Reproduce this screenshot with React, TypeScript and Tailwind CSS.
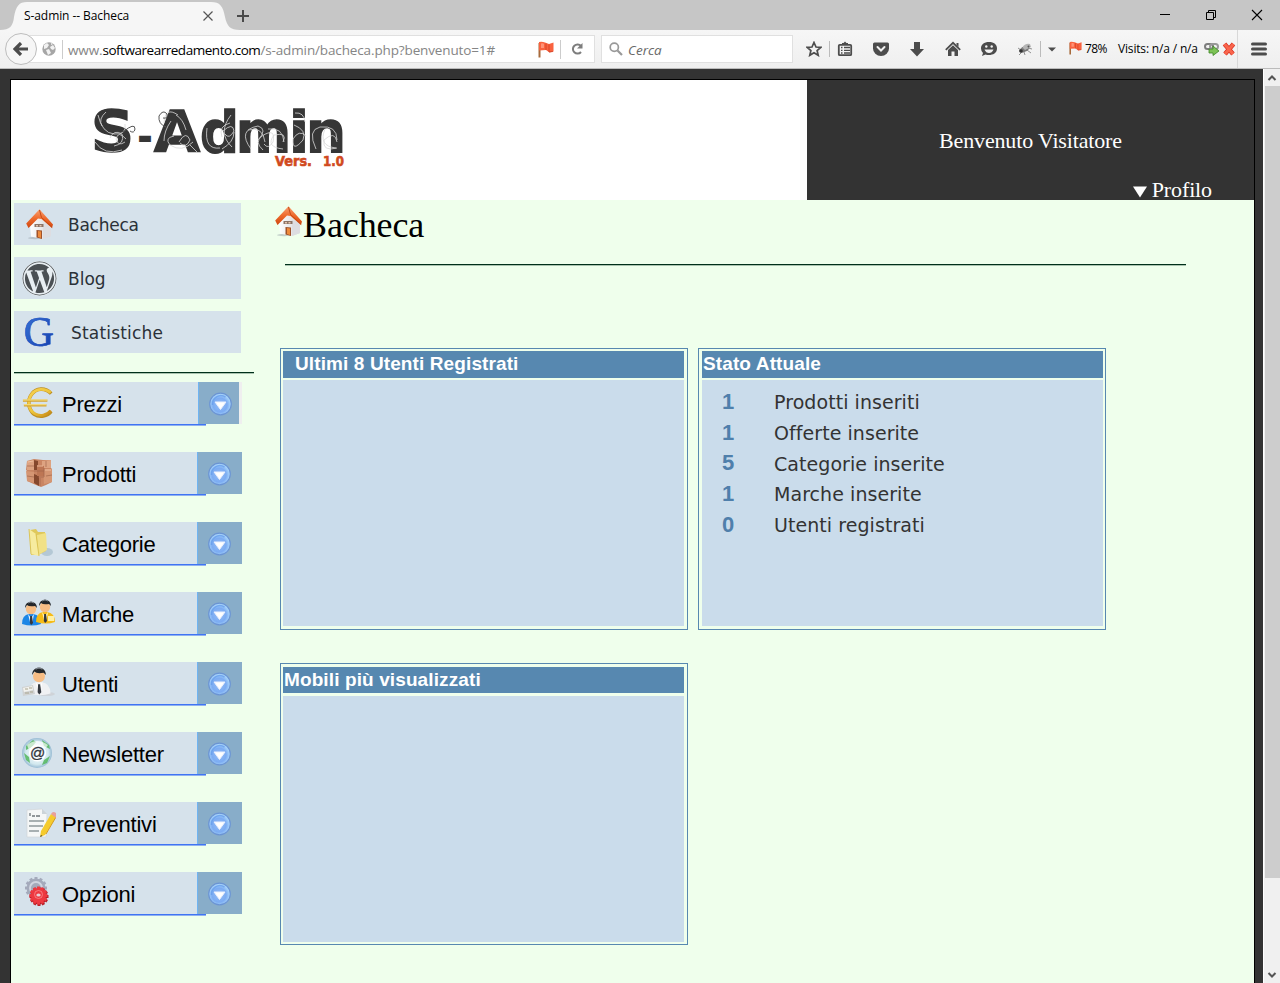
import type { ReactNode } from 'react';
import { FaWordpress } from 'react-icons/fa';

function HouseIcon({ className }: { className: string }) {
  return (
    <svg viewBox="0 0 27 31" className={className}>
      <defs>
        <linearGradient id="roof" x1="0" y1="0" x2="0" y2="1">
          <stop offset="0" stopColor="#f9a173" />
          <stop offset="0.5" stopColor="#ee6a2c" />
          <stop offset="1" stopColor="#cf4710" />
        </linearGradient>
        <linearGradient id="wall" x1="0" y1="0" x2="1" y2="0">
          <stop offset="0" stopColor="#ffffff" />
          <stop offset="1" stopColor="#d5d5d8" />
        </linearGradient>
      </defs>
      <ellipse cx="9" cy="29" rx="7" ry="1.200" fill="#9aa3ab" opacity="0.5" />
      <path d="M4 16 L13 8 L25 18 V27 L17 30 L5 27.500Z" fill="url(#wall)" />
      <path d="M17 14 L25 18 V27 L17 30Z" fill="#dddde1" />
      <path d="M10.500 21 L16 21.500 V30 L10.500 28.500Z" fill="#a0522a" />
      <path d="M12 22 L15 22.500 V29 L12 28Z" fill="#ef8a3c" />
      <path d="M8.500 15 L17.500 15 V18 L8.500 18Z" fill="#8c7467" />
      <path d="M10 16h2v1.500h-2z M13.500 16h2v1.500h-2z" fill="#e3c3ae" />
      <path d="M13.500 0.300 L27 15.500 L26 19 L15.500 10 L12 9.500 L2.500 19 L0.200 14.500Z" fill="url(#roof)" />
      <path d="M13.500 1 L15.500 8.500 L26.200 18.500" stroke="#c2440f" strokeWidth="0.9" fill="none" />
    </svg>
  );
}

function EuroIcon() {
  return (
    <svg viewBox="0 0 34 34" className="mr-[2px] size-8">
      <defs>
        <linearGradient id="gold" x1="0" y1="0" x2="1" y2="1">
          <stop offset="0" stopColor="#f5d050" />
          <stop offset="0.5" stopColor="#eec63b" />
          <stop offset="1" stopColor="#c88a16" />
        </linearGradient>
      </defs>
      <path d="M31 7 C25 .5 15 .5 10 8 C5 15 7 24 13 29 C19 33 27 31 31 26" fill="none" stroke="#bc8d20" strokeWidth="3.800" />
      <path d="M30.500 6 C24 .8 15 1.500 10 8 C5 15 7 24 13 28 C19 32 27 30 30.500 25" fill="none" stroke="url(#gold)" strokeWidth="3" />
      <path d="M1 14.500 H27 M2 19.500 H26" stroke="#d3a332" strokeWidth="2.400" />
      <path d="M1 13.800 H27 M2 18.800 H26" stroke="#fae88a" strokeWidth="1.100" />
    </svg>
  );
}

function BoxesIcon() {
  return (
    <svg viewBox="0 0 34 34" className="size-[34px]">
      <path d="M5 5 L12 3 L21 4 L29 4 L29 12 L30 13 V26 L24 29 L19 31 L14 29 L5 25 V15 L4 14Z" fill="#c98563" />
      <path d="M5 5 L13 4 V14 L5 14Z M20 5 L29 4 V12 L20 12Z" fill="#dda381" />
      <path d="M4 15 L12 16 V27 L5 25Z M21 13 L30 13 V26 L22 28Z" fill="#d59673" />
      <path d="M12 4 L16 5 V14 L12 14Z M12 18 L17 20 V30 L12 27Z" fill="#85482d" />
      <path d="M15 9 L22 10 V20 L15 20Z" fill="#bd7654" />
      <path d="M12 15 H22 M22 12 V21 H16 M5 10 H12 M24 5 V11 M5 20 L12 21 M24 20 L30 19 M18 22V30" stroke="#a0654a" strokeWidth="0.700" fill="none" />
      <path d="M15 10h6M23 14h6M6 6l5-1" stroke="#efc1a2" strokeWidth="0.900" />
    </svg>
  );
}

function FolderIcon() {
  return (
    <svg viewBox="0 0 34 34" className="size-[34px]">
      <ellipse cx="25" cy="26" rx="6" ry="4" fill="#9cb8c6" opacity="0.6" />
      <path d="M8 4 L14 3 L16 6 L23 6 L24 25 L16 29 L9 29Z" fill="#dfc85b" />
      <path d="M15 9 L24 7 L25 24 L16 29Z" fill="#f1e186" />
      <path d="M7 3 L14 8 L17 30 L9 28Z" fill="#f6eb9f" />
      <path d="M14 8 L17 30 M7 3 L9 28" stroke="#d9bf4d" strokeWidth="0.900" />
    </svg>
  );
}

function Person({ x, y, body, collar }: { x: number; y: number; body: string; collar: string }) {
  return (
    <g transform={`translate(${x} ${y})`}>
      <path d="M-9 23 Q-9 14 -2 13 L2 13 Q10 14 10 23 Q1 26 -9 23Z" fill={body} />
      <path d="M-3 13 L0 17 L3 13 L1.500 21 H-1Z" fill={collar} />
      <path d="M-.8 15 H1 L2 22 L.2 24 L-1.200 22Z" fill="#34383f" />
      <circle cx="0" cy="8" r="5.200" fill="#f7bd84" />
      <path d="M-6 7 C-6 -1.500 6 -1.500 6 7 L4 5 Q-2 6 -4 4Z" fill="#24272a" />
      <path d="M-3 2 Q0 0 3 2" stroke="#7b8288" strokeWidth="1" fill="none" />
    </g>
  );
}

function PeopleIcon() {
  return (
    <svg viewBox="0 0 34 34" className="size-[34px] overflow-visible">
      <Person x={9} y={5} body="#1b86e6" collar="#e9f2ff" />
      <Person x={23} y={3} body="#f6bb17" collar="#fff3c0" />
      <path d="M26 20h6v5h-6z" fill="#fff0a5" />
    </svg>
  );
}

function UserIcon() {
  return (
    <svg viewBox="0 0 34 34" className="size-[34px]">
      <ellipse cx="24" cy="28" rx="9" ry="2" fill="#cdd0d3" opacity="0.8" />
      <g transform="translate(17 1) scale(1.150)">
        <Person x={0} y={0} body="#f0f1f3" collar="#ffffff" />
      </g>
      <path d="M0 21 L11 19 L13 28 L1 30Z" fill="#d0d2d2" />
      <path d="M1 22 L10 20 L11 24 L2 26Z" fill="#f2f2ee" />
      <path d="M3 23h3M7 22h3M3 27h4M8 26h3" stroke="#aaa58e" strokeWidth="1" />
    </svg>
  );
}

function MailGlobeIcon() {
  return (
    <svg viewBox="0 0 34 34" className="size-[34px]">
      <defs>
        <radialGradient id="sphere">
          <stop offset="0" stopColor="#ffffff" />
          <stop offset="0.750" stopColor="#d3e9ef" />
          <stop offset="1" stopColor="#98bbd3" />
        </radialGradient>
      </defs>
      <circle cx="15" cy="17" r="15" fill="url(#sphere)" />
      <path d="M4 10 L11 4 L14 6 L10 11 L4 14Z M20 4 L27 9 L28 13 L22 10Z M2 17 L7 21 L8 27 L4 24Z M22 24 L28 20 L25 27 L20 29Z" fill="#54b75d" opacity="0.850" />
      <path d="M5 9 Q15 1 26 9 L23 13 Q15 8 7 14Z" fill="#fff" opacity="0.650" />
      <circle cx="15.500" cy="17" r="6.800" fill="none" stroke="#fff" strokeWidth="3.500" />
      <text x="15.500" y="21.500" textAnchor="middle" fontFamily="Liberation Sans" fontSize="15" stroke="#30353c" strokeWidth="0.300" fill="#30353c">@</text>
    </svg>
  );
}

function NoteIcon() {
  return (
    <svg viewBox="0 0 34 34" className="size-[34px]">
      <path d="M5 4 L20 3 L25 8 L24 31 H5Z" fill="#f5f7f7" stroke="#d1d5d8" strokeWidth="0.700" />
      <path d="M20 3 V8 H25Z" fill="#ccd4d9" />
      <path d="M8 7v3M10 10h3M14 10h4" stroke="#6f777c" strokeWidth="1.300" />
      <path d="M7 15H22M7 20H21M7 25H17" stroke="#8f999c" strokeWidth="1.300" />
      <path d="M29 8 L34 11 L23 29 L18 31 L19 25Z" fill="#f5cb2d" />
      <path d="M30 8 L34 11 L24 28" fill="none" stroke="#d69a19" />
      <path d="M29 8 Q31 4 35 8 L34 12Z" fill="#e8a09a" />
      <path d="M18 31 L19 29 L20.500 30Z" fill="#45412f" />
    </svg>
  );
}

const TEETH = [0, 30, 60, 90, 120, 150, 180, 210, 240, 270, 300, 330];

function Gear({ x, y, r, fill }: { x: number; y: number; r: number; fill: string }) {
  return (
    <g transform={`translate(${x} ${y})`} fill={fill}>
      {TEETH.map((a) => (
        <rect key={a} x="-1.500" y={-r - 1.5} width="3" height="5" transform={`rotate(${a})`} />
      ))}
      <circle r={r} />
    </g>
  );
}

function GearsIcon() {
  return (
    <svg viewBox="0 0 34 34" className="size-[34px]">
      <Gear x={14} y={12} r={9.500} fill="#a4aabb" />
      <circle cx="14" cy="12" r="6" fill="none" stroke="#d0d5e0" strokeWidth="2" />
      <Gear x={17} y={20.500} r={8} fill="#b91f27" />
      <Gear x={16.500} y={19.500} r={7.500} fill="#ed3940" />
      <circle cx="16.500" cy="18.500" r="4" fill="none" stroke="#fa898b" strokeWidth="0.800" />
      <ellipse cx="16.500" cy="19" rx="2.200" ry="1.500" fill="#e8d0d6" />
    </svg>
  );
}

function ArrowBadge() {
  return (
    <svg viewBox="0 0 24 24" className="size-6">
      <defs>
        <radialGradient id="orb" cx="0.480" cy="0.550">
          <stop offset="0" stopColor="#94bdf8" />
          <stop offset="0.650" stopColor="#7cacf2" />
          <stop offset="1" stopColor="#a8d5fb" />
        </radialGradient>
      </defs>
      <circle cx="12.500" cy="12" r="10.800" fill="url(#orb)" stroke="#6b94d3" strokeWidth="1.200" />
      <path d="M4.500 13 A8.500 8.500 0 0 1 17.500 5" fill="none" stroke="#629ae9" strokeWidth="1.500" opacity="0.700" />
      <path d="M7 10 H18 L12.500 17.500Z" fill="#fff" stroke="#e8effd" strokeWidth="1" />
    </svg>
  );
}

function Flag({ className }: { className: string }) {
  return (
    <svg viewBox="0 0 16 17" className={className}>
      <path d="M1.500 2 V16.500" stroke="#a66b3c" strokeWidth="2" />
      <path d="M1 1 Q4 .3 7 1.500 L11 3 L15.500 1.500 V10.500 L11.500 11.500 L8 9 L1 9.500Z" fill="#f9623f" />
      <path d="M3 2.500 Q5 2 6 3 V7 H3Z" fill="#ff9277" />
      <path d="M8 2.500 V9 M11 3.500 V11 L15 10.500" stroke="#c93a20" fill="none" strokeWidth="0.700" />
    </svg>
  );
}

function Tool({ children }: { children: ReactNode }) {
  return <div className="flex w-9 shrink-0 justify-center">{children}</div>;
}

function TabStrip() {
  return (
    <div className="relative flex h-[30px] items-center bg-[#c6c6c6]">
      <svg viewBox="0 0 240 30" className="absolute left-0 top-0 h-[30px] w-[240px]">
        <path d="M0 30 C10 30 13 26 14 17 C16 6 19 2 27 2 H211 C220 2 223 6 225 17 C227 26 230 30 240 30Z" fill="#f6f6f6" />
      </svg>
      <div className="relative flex w-[250px] items-center pl-6 pt-[2px] text-xs leading-4">
        <span className="w-[177px] tracking-[-0.08px]">S-admin -- Bacheca</span>
        <svg viewBox="0 0 12 12" className="ml-px size-3">
          <path d="M1.500 1.500 L10.500 10.500 M10.500 1.500 L1.500 10.500" stroke="#555" strokeWidth="1.200" />
        </svg>
        <svg viewBox="0 0 14 14" className="ml-[22px] size-[14px] shrink-0">
          <path d="M7 1 V13 M1 7 H13" stroke="#4a4a4a" strokeWidth="2" />
        </svg>
      </div>
      <div className="ml-auto flex items-center gap-[34px] pr-[17px]">
        <svg viewBox="0 0 12 12" className="size-3"><path d="M1 5.500 H11" stroke="#000" /></svg>
        <svg viewBox="0 0 12 12" className="size-3">
          <path d="M1.500 3.500 H8.500 V10.500 H1.500Z M3.500 3.500 V1.500 H10.500 V8.500 H8.500" fill="none" stroke="#000" />
        </svg>
        <svg viewBox="0 0 12 12" className="size-3"><path d="M1 1 L11 11 M11 1 L1 11" stroke="#000" strokeWidth="1.100" /></svg>
      </div>
    </div>
  );
}

function Toolbar() {
  return (
    <div className="flex h-[39px] items-center border-b border-[#bbb] bg-linear-to-b from-[#f6f6f6] to-[#efefef] text-xs">
      <div className="relative z-10 ml-[5px] flex size-8 shrink-0 items-center justify-center rounded-full border border-[#bdbdbd] bg-[#f6f6f6]">
        <svg viewBox="0 0 16 14" className="h-[14px] w-4">
          <path d="M8 1 L2 7 L8 13 M2.500 7 H15" fill="none" stroke="#4c4c4c" strokeWidth="3.200" />
        </svg>
      </div>
      <div className="-ml-4 flex h-7 w-[574px] shrink-0 items-center border border-[#e0e0e0] bg-white">
        <svg viewBox="0 0 14 14" className="ml-5 size-[14px]">
          <circle cx="7" cy="7" r="6.700" fill="#a6a6a6" />
          <path d="M2 3 L5 1 L7 3 L5 6 L2 7Z M8 5 L11 3 L13 6 L11 8 L9 7Z M4 8 L7 7 L9 11 L6 13Z M9 1 L11 2 L9 3Z" fill="#f2f2f2" />
        </svg>
        <span className="ml-[6px] h-[19px] w-px bg-[#ccc]" />
        <span className="ml-[5px] w-[470px] whitespace-nowrap pt-px text-[13.5px] tracking-[-0.13px] text-[#858585]">
          www.<span className="tracking-[-0.47px] text-black">softwarearredamento.com</span>/s-admin/bacheca.php?benvenuto=1#
        </span>
        <Flag className="h-[17px] w-4" />
        <span className="ml-[6px] h-[19px] w-px bg-[#ccc]" />
        <svg viewBox="0 0 12 12" className="ml-[10px] size-3">
          <path d="M10 3 A4.600 4.600 0 1 0 10 9" fill="none" stroke="#7d7d7d" strokeWidth="2" />
          <path d="M11.500 0 V5.500 H6Z" fill="#7d7d7d" />
        </svg>
      </div>
      <div className="ml-[6px] flex h-7 w-[192px] shrink-0 items-center border border-[#e0e0e0] bg-white">
        <svg viewBox="0 0 14 14" className="ml-[7px] size-[14px]">
          <circle cx="5.300" cy="5.300" r="4.100" fill="none" stroke="#999" strokeWidth="1.700" />
          <path d="M8.500 8.500 L13 13" stroke="#999" strokeWidth="2.200" />
        </svg>
        <span className="ml-[5px] pt-px text-[13.5px] italic text-[#696969]">Cerca</span>
      </div>
      <div className="ml-[3px] flex items-center">
        <div className="flex w-[31px] shrink-0 justify-center pl-[5px]">
          <svg viewBox="0 0 16 16" className="size-4 shrink-0">
            <path d="M8 1.500 L10 6 L14.800 6.300 L11.100 9.500 L12.200 14.300 L8 11.700 L3.800 14.300 L4.900 9.500 L1.200 6.300 L6 6Z" fill="none" stroke="#4c4c4c" strokeWidth="1.700" />
          </svg>
        </div>
        <span className="ml-[2px] -mr-[3px] h-4 w-px bg-[#bbb]" />
        <Tool>
          <svg viewBox="0 0 16 16" className="size-4">
            <path d="M5 2 L6.500 2 L8 0.500 L9.500 2 L11 2 V4 H5Z" fill="#4c4c4c" />
            <rect x="1.800" y="3.800" width="12.400" height="10.400" rx="1" fill="none" stroke="#4c4c4c" strokeWidth="1.800" />
            <path d="M4 6.500h1.500M7 6.500h6M4 9.300h1.500M7 9.300h6M4 12h1.500M7 12h6" stroke="#4c4c4c" strokeWidth="1.300" />
          </svg>
        </Tool>
        <Tool>
          <svg viewBox="0 0 16 16" className="size-4">
            <path d="M1.500 1.500 H14.500 Q16 1.500 16 3 V7.500 A8 7.500 0 0 1 0 7.500 V3 Q0 1.500 1.500 1.500Z" fill="#4c4c4c" />
            <path d="M4.500 6 L8 9.500 L11.500 6" fill="none" stroke="#f2f2f2" strokeWidth="2" strokeLinecap="round" />
          </svg>
        </Tool>
        <Tool>
          <svg viewBox="0 0 16 16" className="size-4"><path d="M5 1 H11 V8 H15 L8 15.500 L1 8 H5Z" fill="#4c4c4c" /></svg>
        </Tool>
        <Tool>
          <svg viewBox="0 0 16 16" className="size-4">
            <path d="M.8 8.800 L8 1.800 L15.200 8.800" fill="none" stroke="#4c4c4c" strokeWidth="1.800" />
            <path d="M3 9 L8 4.300 L13 9 V15 H9.500 V10.500 H6.500 V15 H3Z M11.500 2 H13.500 V6 L11.500 4Z" fill="#4c4c4c" />
          </svg>
        </Tool>
        <Tool>
          <svg viewBox="0 0 16 16" className="size-4">
            <path d="M8 1 C13 1 16 3.500 16 7.500 C16 12 12 14 8 14 Q6 14 4.500 13.500 L1 15 L2 12 Q0 10 0 7.500 C0 3.500 3 1 8 1Z" fill="#4c4c4c" />
            <circle cx="5.300" cy="5.500" r="1.200" fill="#f2f2f2" /><circle cx="10.700" cy="5.500" r="1.200" fill="#f2f2f2" />
            <path d="M3.500 8.500 H12.500 Q11 12 8 12 Q5 12 3.500 8.500Z" fill="#f2f2f2" />
          </svg>
        </Tool>
        <Tool>
          <svg viewBox="0 0 16 14" className="h-[14px] w-4">
            <ellipse cx="7" cy="7.500" rx="5" ry="2.500" transform="rotate(-22 7 7.500)" fill="#777" />
            <path d="M5 6 Q8 1 13 2 L14 5 L8 8Z" fill="#b5b5b5" />
            <path d="M1 6 L4 8 M4 11 L2 13 M7 10 L8 13 M10 8 L14 11 M11 6 L15 7 M5 5 L7 8" stroke="#777" strokeWidth="0.800" />
            <circle cx="4" cy="9" r="1.800" fill="#333" /><circle cx="11.500" cy="4.500" r="1" fill="#555" />
          </svg>
        </Tool>
      </div>
      <span className="-ml-[3px] h-4 w-px shrink-0 bg-[#bbb]" />
      <svg viewBox="0 0 8 5" className="ml-[7px] h-[5px] w-2 shrink-0"><path d="M0 .5 H8 L4 4.500Z" fill="#4c4c4c" /></svg>
      <Flag className="-mt-[3px] ml-[13px] h-4 w-[13px] shrink-0" />
      <span className="ml-[3px] w-8 shrink-0 text-[12px] tracking-[-0.6px]">78%</span>
      <span className="ml-[1px] w-[86px] shrink-0 whitespace-nowrap text-[12px] tracking-[-0.17px]">Visits: n/a / n/a</span>
      <svg viewBox="0 0 16 14" className="h-[14px] w-4 shrink-0">
        <rect x="1" y="2" width="8" height="5" rx="2.500" fill="none" stroke="#7d7d7d" strokeWidth="2" />
        <rect x="6" y="2" width="8" height="5" rx="2.500" fill="none" stroke="#989898" strokeWidth="2" />
        <path d="M5 7 H9 V4 L15 9 L9 13.500 V11 H5Z" fill="#7cc255" stroke="#3d8626" strokeWidth="0.800" />
      </svg>
      <svg viewBox="0 0 14 14" className="ml-[2px] size-[14px] shrink-0">
        <path d="M2.500 2 L11 12 M11.500 2 L3 12" stroke="#d62e1e" strokeWidth="4.500" />
        <path d="M2.500 2 L11 12 M11.500 2 L3 12" stroke="#f9654c" strokeWidth="3.200" />
      </svg>
      <span className="ml-px h-full w-px shrink-0 bg-[#d8d8d8]" />
      <svg viewBox="0 0 16 14" className="ml-[13px] h-[14px] w-4 shrink-0">
        <path d="M1.500 2 H14.500 M1.500 7 H14.500 M1.500 12 H14.500" stroke="#4c4c4c" strokeWidth="3" strokeLinecap="round" />
      </svg>
    </div>
  );
}

function Logo() {
  return (
    <svg viewBox="0 0 280 85" className="ml-[69px] mt-[15px] h-[85px] w-[280px] shrink-0">
      <text y="57" fill="#363636" stroke="#363636" strokeWidth="1.600" fontFamily="DejaVu Sans" fontWeight="700" fontSize="57">
        <tspan x="11" textLength="43" lengthAdjust="spacingAndGlyphs">S</tspan>
        <tspan x="57" textLength="16" lengthAdjust="spacingAndGlyphs" strokeWidth="0" fontSize="44">-</tspan>
        <tspan x="74" textLength="46" lengthAdjust="spacingAndGlyphs">A</tspan>
        <tspan x="120" textLength="39" lengthAdjust="spacingAndGlyphs">d</tspan>
        <tspan x="156" textLength="55" lengthAdjust="spacingAndGlyphs">m</tspan>
        <tspan x="209" textLength="20" lengthAdjust="spacingAndGlyphs">i</tspan>
        <tspan x="226" textLength="40" lengthAdjust="spacingAndGlyphs">n</tspan>
      </text>
      <g fill="none" stroke="#d8d8d8" strokeWidth="0.800">
        <path d="M18 20 Q22 38 34 39 Q47 40 45 29 M15 47 Q24 61 42 55 M26 17 Q18 24 22 31 M46 44 q-8-9-10 0 q2 8 9 3 M30 43 q4-9 12-4 q3 10-8 12" />
        <path d="M98 20 Q85 11 84 28 M96 20 Q103 24 106 35 M94 41 q-10 2-4 9 q12 8 23-3 M99 47 q7-12 11-2 q-4 9-10 3 M110 50 L117 57 M91 26 q-7 10-7 20" />
        <path d="M127 33 q-3 22 13 20 M151 20 q-14 18 1 32 M143 36 q10-9 11 0 q-5 9-9 3 M142 54 q12-7 12-17 M150 28 q-12 3-8 14" />
        <path d="M171 54 q-14-19 7-23 q10 3 0 14 M183 55 q-9-8-1-14 q14-9 11 6 q-5 8-9 2 M203 54 q-18-2-9-14 q14-3 9 7 M168 35 q15-4 17 12 M188 34 q15-2 16 13" />
        <path d="M214 30 q13 5 9 15 q-11 13-10-1 q6-10 13-3 M215 18 q9-1 10 9 M236 54 q-9-19 4-22 q17-2 17 13 M257 53 q-15 4-13-8 q11-10 13 2 M245 34 q-7 17 11 19" />
      </g>
      <path d="M86 32 q-8-3-7-11 q4-7 8-2 q1 5-4 4 M43 37 q12-10 12-3 q-1 5-5 2" fill="none" stroke="#555" strokeWidth="1" />
      <g fill="#d14a1e" stroke="#d14a1e" strokeWidth="0.600" fontFamily="DejaVu Sans" fontWeight="700" fontSize="13.500">
        <text x="195" y="71" textLength="37" lengthAdjust="spacingAndGlyphs">Vers.</text>
        <text x="243" y="71" textLength="21" lengthAdjust="spacingAndGlyphs">1.0</text>
      </g>
    </svg>
  );
}

function QuickLink({ icon, label, className }: { icon: ReactNode; label: string; className: string }) {
  return (
    <a className="flex h-[42px] w-[227px] items-center bg-[#d6e2eb] font-['DejaVu_Sans'] text-[17px] leading-5 text-[#2b3138]">
      <span className="flex w-[50px] shrink-0 justify-center">{icon}</span>
      <span className={className}>{label}</span>
    </a>
  );
}

const MENU: { label: string; icon: ReactNode }[] = [
  { label: 'Prezzi', icon: <EuroIcon /> },
  { label: 'Prodotti', icon: <BoxesIcon /> },
  { label: 'Categorie', icon: <FolderIcon /> },
  { label: 'Marche', icon: <PeopleIcon /> },
  { label: 'Utenti', icon: <UserIcon /> },
  { label: 'Newsletter', icon: <MailGlobeIcon /> },
  { label: 'Preventivi', icon: <NoteIcon /> },
  { label: 'Opzioni', icon: <GearsIcon /> },
];

function Sidebar() {
  return (
    <nav className="w-[243px] shrink-0 pl-[3px] pt-[3px]">
      <div className="flex flex-col gap-3">
        <QuickLink icon={<HouseIcon className="h-[31px] w-[27px]" />} label="Bacheca" className="ml-1 pt-[2px] tracking-[-0.25px]" />
        <QuickLink icon={<FaWordpress className="size-[35px] rounded-full bg-[#e8eef2] text-[#4b5054]" />} label="Blog" className="ml-1 pt-[2px]" />
        <QuickLink
          icon={
            <span className="bg-linear-to-br from-[#3a74d8] to-[#143caa] bg-clip-text font-['Liberation_Serif'] text-[42px] leading-10 text-transparent [-webkit-text-stroke:0.5px_#1f50c0]">
              G
            </span>
          }
          label="Statistiche"
          className="ml-[7px] pt-[2px] tracking-[0.18px]"
        />
      </div>
      <div className="mt-[19px] h-[2px] border-b border-t border-b-[#a9c3af] border-t-[#00301a]" />
      <ul className="mt-2 flex flex-col gap-[26px]">
        {MENU.map(({ label, icon }, i) => (
          <li key={label} className="h-11">
            <a className="flex h-[42px] w-[228px] bg-[#d6e2eb]">
              <span className={i === 0 ? 'flex w-[184px] items-center pl-2' : 'flex w-[183px] items-center pl-2'}>
                {icon}
                <span className="ml-[6px] pt-[4px] font-['Liberation_Sans'] text-[22px] leading-6 tracking-[-0.2px] text-black">{label}</span>
              </span>
              <span
                className={
                  i === 0
                    ? 'flex w-[41px] items-center border-l border-[#6fb4f2] bg-[#88adc9] pl-[9px] pt-[2px]'
                    : 'flex w-[45px] items-center border-l border-[#6fb4f2] bg-[#88adc9] pl-[9px] pt-[2px]'
                }
              >
                <ArrowBadge />
              </span>
              {i === 0 && <span className="w-[3px] bg-[#efefef]" />}
            </a>
            <div className="h-[2px] w-[192px] border-b border-t border-b-[#8fb0f0] border-t-[#3f74f4]" />
          </li>
        ))}
      </ul>
    </nav>
  );
}

function Panel({ title, titleClass, bodyClass, children }: { title: string; titleClass: string; bodyClass: string; children?: ReactNode }) {
  return (
    <section className="flex h-[282px] w-[408px] flex-col border border-[#5788b0]">
      <h2 className={titleClass}>{title}</h2>
      <div className={bodyClass}>{children}</div>
    </section>
  );
}

const STATS: [number, string][] = [
  [1, 'Prodotti inseriti'],
  [1, 'Offerte inserite'],
  [5, 'Categorie inserite'],
  [1, 'Marche inserite'],
  [0, 'Utenti registrati'],
];

function Main() {
  return (
    <main className="min-w-0 flex-1">
      <div className="flex h-[64px] items-start pl-[21px]">
        <HouseIcon className="mt-[6px] h-[31px] w-[27px]" />
        <h1 className="ml-px mt-1 font-['Liberation_Serif'] text-[36px] leading-[42px] tracking-[-0.1px] text-black">Bacheca</h1>
      </div>
      <div className="ml-[31px] h-[2px] w-[901px] border-b border-t border-b-[#a9c3af] border-t-[#00301a]" />
      <div className="ml-[26px] mt-[82px] grid w-[826px] grid-cols-[408px_408px] gap-x-[10px] gap-y-[33px]">
        <Panel
          title="Ultimi 8 Utenti Registrati"
          titleClass="ml-[2px] mr-[3px] mt-[2px] h-[27px] bg-[#5788b0] pl-3 font-['Liberation_Sans'] text-[19px] font-bold leading-[25px] tracking-[0.11px] text-white"
          bodyClass="ml-[2px] mr-[3px] mt-[2px] h-[246px] bg-[#cadceb]"
        />
        <Panel
          title="Stato Attuale"
          titleClass="ml-[3px] mr-[2px] mt-[2px] h-[27px] bg-[#5788b0] pl-px font-['Liberation_Sans'] text-[19px] font-bold leading-[25px] tracking-[0.12px] text-white"
          bodyClass="ml-[3px] mr-[2px] mt-[2px] h-[246px] bg-[#cadceb] pt-[7px]"
        >
          {STATS.map(([n, label]) => (
            <div key={label} className="flex h-[30.750px] items-center">
              <span className="w-[72px] pb-[2px] pl-[20px] font-['Liberation_Sans'] text-[22px] font-bold text-[#4f7fab]">{n}</span>
              <span className="font-['DejaVu_Sans'] text-[19px] tracking-[0.06px] text-[#333]">{label}</span>
            </div>
          ))}
        </Panel>
        <Panel
          title="Mobili più visualizzati"
          titleClass="ml-[2px] mr-[3px] mt-[3px] h-[26px] bg-[#5788b0] pl-px font-['Liberation_Sans'] text-[19px] font-bold leading-[26px] tracking-[0.11px] text-white"
          bodyClass="ml-[2px] mr-[3px] mt-[3px] h-[246px] bg-[#cadceb]"
        />
      </div>
    </main>
  );
}

export default function App() {
  return (
    <div className="flex h-[983px] w-[1280px] flex-col overflow-hidden bg-[#333] font-['Open_Sans',sans-serif] text-black">
      <TabStrip />
      <Toolbar />
      <div className="flex min-h-0 flex-1">
        <div className="min-w-0 flex-1 pl-[10px] pr-2 pt-[10px]">
          <div className="flex h-full flex-col border-x border-t border-black">
            <header className="flex h-[120px] shrink-0">
              <div className="flex w-[796px] bg-white"><Logo /></div>
              <div className="flex flex-1 flex-col font-['Liberation_Serif'] text-[22px] leading-6 text-white">
                <p className="mt-[49px] text-center tracking-[-0.15px]">Benvenuto Visitatore</p>
                <p className="mt-[27px] flex h-5 items-center justify-end pr-[42px] leading-5 tracking-[-0.12px]">
                  <svg viewBox="0 0 14 12" className="mr-[5px] mt-[3px] h-3 w-[14px]"><path d="M0 .5 H14 L7 11.500Z" fill="#fff" /></svg>
                  Profilo
                </p>
              </div>
            </header>
            <div className="flex flex-1 bg-[#efffec]">
              <Sidebar />
              <Main />
            </div>
          </div>
        </div>
        <div className="flex w-[17px] shrink-0 flex-col items-center border-l border-white bg-[#f0f0f0]">
          <svg viewBox="0 0 16 17" className="h-[17px] w-4 shrink-0"><path d="M4.500 11 L8 7.500 L11.500 11" fill="none" stroke="#555" strokeWidth="2" /></svg>
          <div className="h-[792px] w-[15px] shrink-0 bg-[#cdcdcd]" />
          <svg viewBox="0 0 16 17" className="mt-auto h-[17px] w-4 shrink-0"><path d="M4.500 7 L8 10.500 L11.500 7" fill="none" stroke="#555" strokeWidth="2" /></svg>
        </div>
      </div>
    </div>
  );
}
